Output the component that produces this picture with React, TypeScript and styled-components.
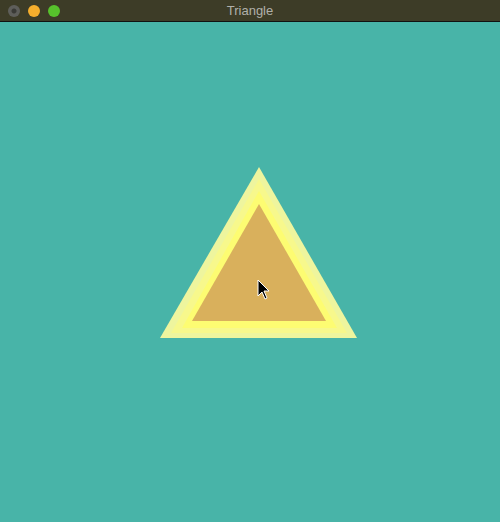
import styled, { createGlobalStyle } from 'styled-components';

const GlobalStyle = createGlobalStyle`
  html, body {
    margin: 0;
    padding: 0;
    background: #48b4a8;
  }
  * {
    box-sizing: border-box;
  }
`;

const Window = styled.div`
  width: 500px;
  height: 522px;
  display: flex;
  flex-direction: column;
  background: #48b4a8;
  font-family: 'Liberation Sans', Arial, sans-serif;
`;

const TitleBar = styled.div`
  position: relative;
  height: 22px;
  flex: 0 0 22px;
  display: flex;
  align-items: center;
  gap: 8px;
  padding-left: 8px;
  background: #3d3c27;
  border-bottom: 1px solid #111;
`;

const Light = styled.span<{ $color: string; $dim?: boolean }>`
  width: 12px;
  height: 12px;
  border-radius: 50%;
  background: ${(p) =>
    p.$dim ? `radial-gradient(circle, #3a3a36 0 2px, ${p.$color} 3px)` : p.$color};
`;

const Title = styled.div`
  position: absolute;
  left: 0;
  right: 0;
  top: 0;
  bottom: 0;
  display: flex;
  align-items: center;
  justify-content: center;
  color: #b0b0aa;
  font-size: 13px;
  pointer-events: none;
`;

const Canvas = styled.svg`
  display: block;
  flex: 1;
`;

// offset: svg starts below the 22px title bar
const OY = 22;

function tri(ax: number, ay: number, lx: number, rx: number, by: number) {
  return `${ax},${ay - OY} ${lx},${by - OY} ${rx},${by - OY}`;
}

export default function App() {
  return (
    <>
      <GlobalStyle />
      <Window>
        <TitleBar>
          <Light $color="#5e5e5a" $dim />
          <Light $color="#f5ae2d" />
          <Light $color="#57c22c" />
          <Title>Triangle</Title>
        </TitleBar>
        <Canvas width={500} height={500} viewBox="0 0 500 500">
          <polygon points={tri(259, 167, 160, 357, 338)} fill="#eef59e" />
          <polygon points={tri(259, 179, 171, 347, 333)} fill="#f7f88c" />
          <polygon points={tri(259, 191, 182, 337, 328)} fill="#fdfc72" />
          <polygon points={tri(259, 204, 192, 326, 321)} fill="#d9b05c" />
          <path
            d={`M258 ${280 - OY} L258 ${296 - OY} L262 ${292 - OY} L265 ${299 - OY} L267 ${298 - OY} L264 ${291 - OY} L269 ${291 - OY} Z`}
            fill="#000"
            stroke="#fff"
            strokeWidth={1}
          />
        </Canvas>
      </Window>
    </>
  );
}
